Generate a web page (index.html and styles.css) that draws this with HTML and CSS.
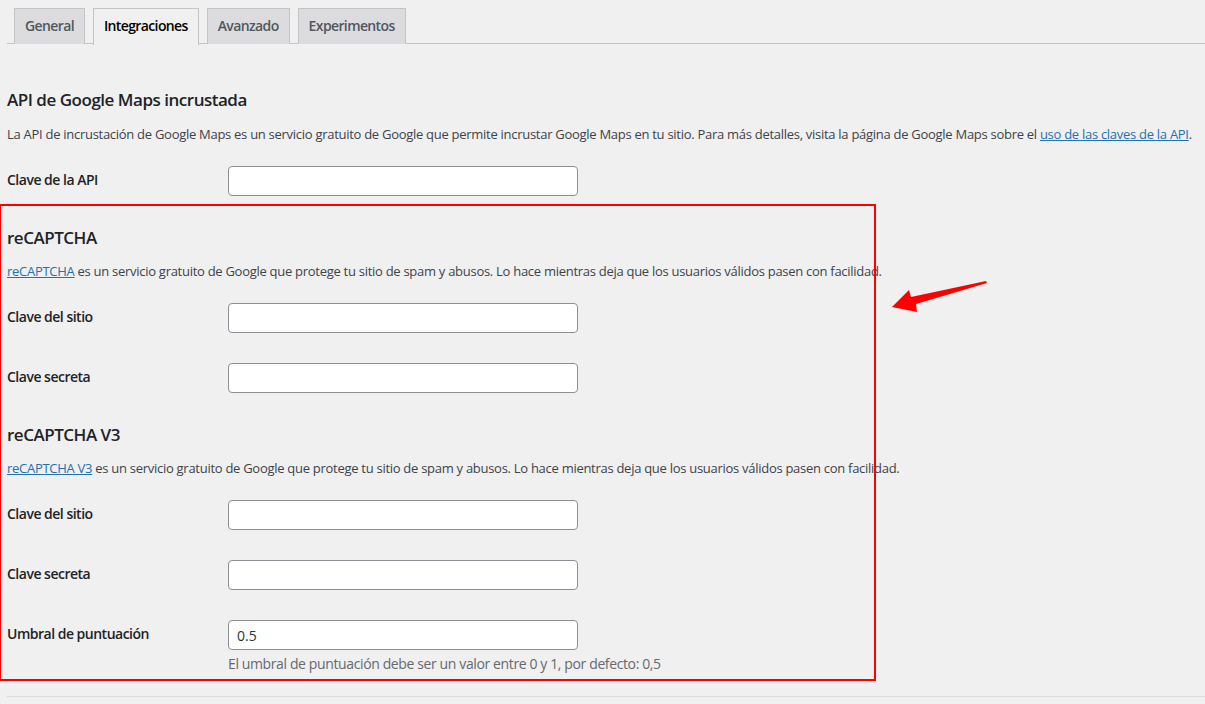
FILE: index.html
```html
<!DOCTYPE html>
<html lang="es">
<head>
<meta charset="utf-8">
<title>Ajustes - Integraciones</title>
<link rel="stylesheet" href="styles.css">
</head>
<body>
<div class="wrap">
  <nav class="tabs">
    <a class="tab" href="#">General</a>
    <a class="tab active" href="#">Integraciones</a>
    <a class="tab" href="#">Avanzado</a>
    <a class="tab" href="#">Experimentos</a>
  </nav>

  <section class="group first">
    <h2 class="title">API de Google Maps incrustada</h2>
    <p class="desc">La API de incrustación de Google Maps es un servicio gratuito de Google que permite incrustar Google Maps en tu sitio. Para más detalles, visita la página de Google Maps sobre el <a href="#">uso de las claves de la API</a>.</p>
    <div class="rows">
      <div class="row"><label class="label">Clave de la API</label><div class="field"><input class="input" type="text"></div></div>
    </div>
  </section>

  <section class="group">
    <h2 class="title">reCAPTCHA</h2>
    <p class="desc"><a href="#">reCAPTCHA</a> es un servicio gratuito de Google que protege tu sitio de spam y abusos. Lo hace mientras deja que los usuarios válidos pasen con facilidad.</p>
    <div class="rows">
      <div class="row"><label class="label">Clave del sitio</label><div class="field"><input class="input" type="text"></div></div>
      <div class="row"><label class="label">Clave secreta</label><div class="field"><input class="input" type="text"></div></div>
    </div>
  </section>

  <section class="group">
    <h2 class="title">reCAPTCHA V3</h2>
    <p class="desc"><a href="#">reCAPTCHA V3</a> es un servicio gratuito de Google que protege tu sitio de spam y abusos. Lo hace mientras deja que los usuarios válidos pasen con facilidad.</p>
    <div class="rows">
      <div class="row"><label class="label">Clave del sitio</label><div class="field"><input class="input" type="text"></div></div>
      <div class="row"><label class="label">Clave secreta</label><div class="field"><input class="input" type="text"></div></div>
      <div class="row"><label class="label">Umbral de puntuación</label><div class="field"><input class="input" type="text" value="0.5"><p class="help">El umbral de puntuación debe ser un valor entre 0 y 1, por defecto: 0,5</p></div></div>
    </div>
  </section>

  <hr class="sep">
</div>

<div class="annot-box"></div>
<svg class="annot-arrow" width="100" height="40" viewBox="888 278 100 40" xmlns="http://www.w3.org/2000/svg">
  <polygon points="892,307 909,290 911,297 986,281 987,283 916,304 917,312" fill="#ff0000"/>
</svg>
</body>
</html>
```

FILE: styles.css
```css
* { box-sizing: border-box; }
html, body { margin: 0; padding: 0; }
body {
  background: #f0f0f1;
  font-family: "Open Sans", "Noto Sans", sans-serif;
  color: #3c434a;
  font-size: 13px;
  width: 1205px;
  height: 704px;
  overflow: hidden;
  position: relative;
}
.wrap { padding-left: 7px; }

.tabs {
  display: flex;
  margin-top: 8px;
  height: 36px;
  border-bottom: 1px solid #c3c4c7;
  padding-left: 7px;
  gap: 8px;
}
.tab {
  display: block;
  height: 36px;
  padding: 5px 10px;
  line-height: 24px;
  font-size: 14px;
  font-weight: 600;
  letter-spacing: -0.62px;
  color: #50575e;
  text-decoration: none;
  background: #dcdcde;
  border: 1px solid #c3c4c7;
  border-bottom: none;
}
.tab.active {
  background: #f0f0f1;
  color: #000;
  height: 37px;
}

.title {
  margin: 16px 0 0;
  font-size: 17px;
  line-height: 22px;
  font-weight: 600;
  letter-spacing: -0.48px;
  color: #1d2327;
}
.group.first .title { margin-top: 45px; }
.desc {
  margin: 12px 0 0;
  line-height: 20px;
  font-size: 13px;
  letter-spacing: -0.28px;
  color: #3c434a;
  white-space: nowrap;
}
.group.first .desc { margin-top: 13px; }
.desc a { color: #2271b1; text-decoration: underline; }

.rows { margin-top: 7px; }
.row {
  display: grid;
  grid-template-columns: 221px 1fr;
}
.label {
  padding: 20px 0;
  font-size: 14px;
  line-height: 18px;
  font-weight: 600;
  letter-spacing: -0.5px;
  color: #1d2327;
}
.field { padding: 15px 0; }
.input {
  display: block;
  width: 350px;
  height: 30px;
  border: 1px solid #8c8f94;
  border-radius: 4px;
  background: #fff;
  padding: 0 8px;
  font-family: inherit;
  font-size: 14px;
  color: #2c3338;
  margin: 0;
}
.help {
  margin: 4px 0 0;
  line-height: 20px;
  font-size: 14px;
  letter-spacing: -0.38px;
  color: #646970;
}
.sep {
  margin: 7px 0 0;
  border: 0;
  border-top: 1px solid #dcdcde;
  height: 0;
}

.annot-box {
  position: absolute;
  left: -1px;
  top: 204px;
  width: 877px;
  height: 477px;
  border: 2px solid #ff0000;
}
.annot-arrow {
  position: absolute;
  left: 888px;
  top: 278px;
}
```
